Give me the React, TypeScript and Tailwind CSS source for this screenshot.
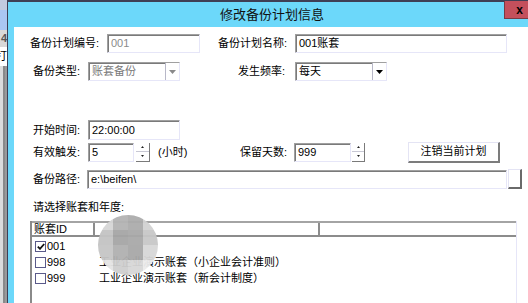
import React from 'react';

const sunken =
  'border border-t-[#a0a0a0] border-l-[#a0a0a0] border-r-[#e6e6f8] border-b-[#e6e6f8] bg-white shadow-[inset_1px_1px_0_#7a7a7a]';

function TextBox({ value, w, h = 'h-[19px]', muted }: { value: string; w: string; h?: string; muted?: boolean }) {
  return (
    <div className={`${w} ${h} ${sunken} flex items-center pl-[3px] ${muted ? 'text-[#8a8a8a]' : 'text-black'}`}>
      <span className="leading-none">{value}</span>
    </div>
  );
}

function Triangle({ down = true, color = '#000' }: { down?: boolean; color?: string }) {
  return (
    <svg width="7" height="4" viewBox="0 0 7 4">
      <path d={down ? 'M0 0h7L3.5 4z' : 'M0 4h7L3.5 0z'} fill={color} />
    </svg>
  );
}

function Select({ value, w, disabled }: { value: string; w: string; disabled?: boolean }) {
  return (
    <div className={`${w} h-[19px] ${sunken} flex items-center`}>
      <span className={`flex-1 pl-[3px] leading-none ${disabled ? 'text-[#7a7a7a]' : 'text-black'}`}>{value}</span>
      <div className="flex h-full w-[14px] items-center justify-center border-l border-[#b8b8c8] bg-white">
        <Triangle color={disabled ? '#8a8a8a' : '#000'} />
      </div>
    </div>
  );
}

function Spinner({ w = 'w-[14px]' }: { w?: string }) {
  return (
    <div className={`${w} flex h-[19px] flex-col border-b border-r border-[#7a7a7a]`}>
      <div className="flex flex-1 items-center justify-center border-b border-[#c8c8d4]">
        <svg width="3" height="2" viewBox="0 0 3 2"><path d="M0 2h3L1.5 0z" fill="#222" /></svg>
      </div>
      <div className="flex flex-1 items-center justify-center">
        <svg width="3" height="2" viewBox="0 0 3 2"><path d="M0 0h3L1.5 2z" fill="#222" /></svg>
      </div>
    </div>
  );
}

function Check({ checked }: { checked?: boolean }) {
  return (
    <div className="flex h-[11px] w-[11px] items-center justify-center border border-[#5a5a8a] bg-white">
      {checked && (
        <svg width="8" height="7" viewBox="0 0 8 7">
          <path d="M0.8 3.6 3 5.8 7.2 1" stroke="#111" strokeWidth="1.8" fill="none" />
        </svg>
      )}
    </div>
  );
}

const rows = [
  { id: '001', name: '', checked: true },
  { id: '998', name: '工业企业演示账套（小企业会计准则）' },
  { id: '999', name: '工业企业演示账套（新会计制度）' },
];

export default function App() {
  return (
    <div className="relative flex h-[303px] w-[528px] overflow-hidden bg-white font-['Liberation_Sans','Noto_Sans_CJK_SC',sans-serif] text-[11px] text-black">
      {/* window behind the dialog */}
      <div className="flex w-[7px] flex-col bg-[#dcdcdc]">
        <div className="h-[10px] bg-[#c2cbe0]" />
        <div className="h-[20px] bg-[#aac6f2]" />
        <div className="flex h-[17px] items-center justify-end overflow-hidden bg-[#d8d8d8] text-[11px] font-bold text-[#555]">4</div>
        <div className="flex h-[19px] items-center justify-end overflow-hidden bg-white text-[11px]">打</div>
        <div className="flex flex-1 border-r-[2px] border-[#9a9a9a]">
          <div className="ml-[3px] w-[2px] bg-[#8a8a8a]" />
        </div>
      </div>

      {/* dialog */}
      <div className="flex min-w-0 flex-1 flex-col border-l border-t-2 border-[#3f3f55] bg-[#6cd8fa]">
        <div className="relative flex h-[25px] shrink-0 items-center pl-[212px]">
          <span className="text-[13px] leading-none text-[#111]">修改备份计划信息</span>
          <div className="absolute right-0 top-[-1px] flex h-[18px] w-[24px] items-center justify-center border-b border-l border-[#7a3a44] bg-[#c4505c] pl-[6px] text-[12px] font-bold leading-none text-black">
            x
          </div>
        </div>

        <div className="flex flex-1 pl-[6px]">
          <div className="flex flex-1 flex-col bg-white">
            {/* row 1 */}
            <div className="mt-[7px] flex items-center pl-[16px]">
              <span className="w-[77px]">备份计划编号:</span>
              <TextBox value="001" w="w-[93px]" muted />
              <span className="ml-[18px] w-[77px]">备份计划名称:</span>
              <TextBox value="001账套" w="w-[212px]" />
            </div>

            {/* row 2 */}
            <div className="mt-[9px] flex items-center pl-[19px]">
              <span className="w-[55px]">备份类型:</span>
              <Select value="账套备份" w="w-[92px]" disabled />
              <span className="ml-[58px] w-[57px]">发生频率:</span>
              <Select value="每天" w="w-[92px]" />
            </div>

            {/* row 3 */}
            <div className="mt-[39px] flex items-center pl-[19px]">
              <span className="w-[55px]">开始时间:</span>
              <TextBox value="22:00:00" w="w-[92px]" h="h-[20px]" />
            </div>

            {/* row 4 */}
            <div className="mt-[1px] flex h-[22px] items-center pl-[19px]">
              <span className="w-[55px]">有效触发:</span>
              <TextBox value="5" w="w-[46px]" />
              <div className="ml-[2px]"><Spinner /></div>
              <span className="ml-[8px] w-[82px]">(小时)</span>
              <span className="w-[54px]">保留天数:</span>
              <TextBox value="999" w="w-[57px]" />
              <div className="ml-[1px]"><Spinner w="w-[13px]" /></div>
              <button className="ml-[43px] flex h-[21px] w-[92px] items-center justify-center border border-b-2 border-r-2 border-l-[#e4e4f4] border-t-[#e4e4f4] border-b-[#7c7c7c] border-r-[#7c7c7c] bg-white text-[11px]">
                注销当前计划
              </button>
            </div>

            {/* row 5 */}
            <div className="mt-[6px] flex items-center pl-[19px]">
              <span className="w-[54px]">备份路径:</span>
              <TextBox value="e:\beifen\" w="w-[420px]" />
              <div className="ml-[1px] h-[20px] w-[14px] border border-b-2 border-r-2 border-l-[#e4e4f4] border-t-[#e4e4f4] border-b-[#6a6a6a] border-r-[#6a6a6a] bg-white" />
            </div>

            {/* row 6 */}
            <div className="mt-[11px] pl-[19px] leading-[14px]">请选择账套和年度:</div>

            {/* list */}
            <div className="ml-[16px] mt-[7px] flex w-[487px] flex-1 flex-col border-l-2 border-r border-[#8a8a8a] border-r-[#e6e6f8]">
              <div className="flex h-[16px] border-b-2 border-t-2 border-b-[#8c8c8c] border-t-[#a4a4a4]">
                <div className="flex w-[63px] items-center border-r-2 border-[#8c8c8c] pl-[2px] leading-none">账套ID</div>
                <div className="w-[225px] border-r-2 border-[#8c8c8c] pl-[2px]" />
                <div className="flex-1" />
              </div>
              <div className="flex flex-col pt-[1px]">
                {rows.map((r) => (
                  <div key={r.id} className="flex h-[16px] items-center">
                    <div className="flex w-[67px] items-center gap-[1px] pl-[3px]">
                      <Check checked={r.checked} />
                      <span className="leading-none">{r.id}</span>
                    </div>
                    <span className="leading-none">{r.name}</span>
                  </div>
                ))}
              </div>
            </div>
          </div>
        </div>
      </div>

      {/* touch indicator */}
      <div className="absolute left-[98px] top-[215px] grid h-[60px] w-[60px] grid-cols-4 overflow-hidden rounded-full opacity-95">
        <div className="bg-[#d6d6d6]" />
        <div className="bg-[#b4b4b4]" />
        <div className="bg-[#acacac]" />
        <div className="bg-[#d2d2d2]" />
        <div className="bg-[#c4c4c4]" />
        <div className="bg-[#a6a6a6]" />
        <div className="bg-[#a9a9a9]" />
        <div className="bg-[#c8c8c8]" />
        <div className="bg-[#c6c6c6]" />
        <div className="bg-[#b0b0b0]" />
        <div className="bg-[#a8a8a8]" />
        <div className="bg-[#d8d8d8]" />
        <div className="bg-[#e4e4e4]" />
        <div className="bg-[#cfcfcf]" />
        <div className="bg-[#d8d8d8]" />
        <div className="bg-[#ececec]" />
      </div>
    </div>
  );
}
